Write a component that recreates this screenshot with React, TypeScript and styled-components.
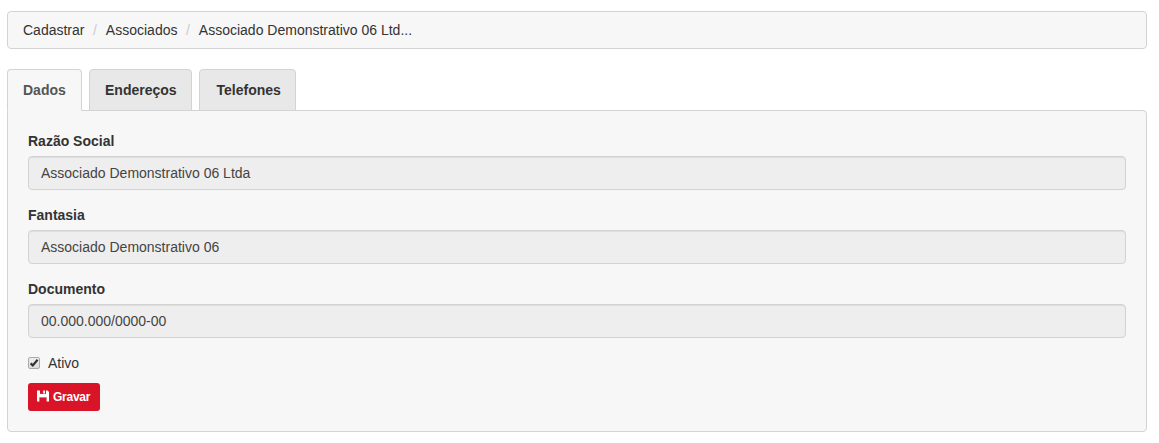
import React, { useState } from "react";
import styled, { createGlobalStyle } from "styled-components";

const GlobalStyle = createGlobalStyle`
  *, *::before, *::after { box-sizing: border-box; }
  body {
    margin: 0;
    background: #fff;
    color: #333;
    font: 14px/20px "Liberation Sans", Arial, sans-serif;
  }
`;

const Page = styled.main`
  padding: 11px 12px 11px 7px;
`;

const Breadcrumb = styled.ol`
  display: flex;
  list-style: none;
  height: 38px;
  margin: 0 0 20px;
  padding: 8px 15px;
  border: 1px solid #d3d3d3;
  border-radius: 4px;
  background: #f7f7f7;
`;

const Crumb = styled.li`
  & + &::before {
    content: "/";
    padding: 0 9px 0 8.5px;
    color: #ccc;
  }
`;

const Tabs = styled.nav`
  display: flex;
  gap: 7px;
  margin-bottom: -1px;
`;

const Tab = styled.button<{ $active: boolean; $width: number; $inset: number }>`
  position: relative;
  width: ${(p) => p.$width}px;
  height: 42px;
  padding: 0 0 0 ${(p) => p.$inset}px;
  border: 1px solid #d3d3d3;
  border-bottom-color: ${(p) => (p.$active ? "#f7f7f7" : "#d3d3d3")};
  border-radius: 4px 4px 0 0;
  background: ${(p) => (p.$active ? "#f7f7f7" : "#e8e8e8")};
  color: ${(p) => (p.$active ? "#555" : "#333")};
  font: bold 14px/20px "Liberation Sans", Arial, sans-serif;
  text-align: left;
  z-index: ${(p) => (p.$active ? 1 : 0)};
`;

const Panel = styled.section`
  height: 322px;
  padding: 20px;
  border: 1px solid #d3d3d3;
  border-radius: 0 4px 4px 4px;
  background: #f7f7f7;
`;

const Field = styled.div`
  margin-bottom: 15px;
`;

const Label = styled.label`
  display: block;
  margin-bottom: 5px;
  font-weight: bold;
`;

const Input = styled.input`
  display: block;
  width: 100%;
  height: 34px;
  padding: 6px 12px;
  border: 1px solid #d3d3d3;
  border-radius: 4px;
  background: #eee;
  box-shadow: inset 0 1px 1px rgba(0, 0, 0, 0.075);
  color: #444;
  font: 14px/20px "Liberation Sans", Arial, sans-serif;
  outline: none;
`;

const CheckRow = styled.label`
  display: flex;
  align-items: center;
  gap: 8px;
  height: 20px;
  margin-bottom: 10px;
`;

const Checkbox = styled.span`
  display: flex;
  width: 12px;
  height: 12px;
  border: 1px solid #aaa;
  border-radius: 2px;
  background: linear-gradient(#eee, #dcdcdc);
`;

const SaveButton = styled.button`
  display: flex;
  align-items: center;
  gap: 4px;
  width: 72px;
  height: 28px;
  padding: 0 9px;
  border: 0;
  border-radius: 3px;
  background: #da1428;
  color: #fff;
  font: bold 12px/18px "Liberation Sans", Arial, sans-serif;
  letter-spacing: -0.25px;
`;

const SaveIcon = styled.svg`
  flex: none;
  margin-top: -2px;
`;

const tabs = [
  { name: "Dados", width: 75, inset: 15 },
  { name: "Endereços", width: 103, inset: 15 },
  { name: "Telefones", width: 97, inset: 16.5 },
];

const fields = [
  { label: "Razão Social", value: "Associado Demonstrativo 06 Ltda" },
  { label: "Fantasia", value: "Associado Demonstrativo 06" },
  { label: "Documento", value: "00.000.000/0000-00" },
];

export default function App() {
  const [active, setActive] = useState("Dados");
  return (
    <Page>
      <GlobalStyle />
      <Breadcrumb>
        <Crumb>Cadastrar</Crumb>
        <Crumb>Associados</Crumb>
        <Crumb>Associado Demonstrativo 06 Ltd...</Crumb>
      </Breadcrumb>
      <Tabs>
        {tabs.map((t) => (
          <Tab
            key={t.name}
            $active={t.name === active}
            $width={t.width}
            $inset={t.inset}
            onClick={() => setActive(t.name)}
          >
            {t.name}
          </Tab>
        ))}
      </Tabs>
      <Panel>
        {fields.map((f) => (
          <Field key={f.label}>
            <Label>{f.label}</Label>
            <Input readOnly value={f.value} />
          </Field>
        ))}
        <CheckRow>
          <Checkbox>
            <svg width="10" height="10" viewBox="0 0 10 10">
              <path d="M1.6 5.4 3.8 7.4 8.6 1.8" fill="none" stroke="#333" strokeWidth="2.2" />
            </svg>
          </Checkbox>
          Ativo
        </CheckRow>
        <SaveButton>
          <SaveIcon width="12" height="12" viewBox="0 0 12 12" fill="#fff">
            <path d="M0 0.5H3V4.5H9V0.5H10.6L12 2V11.5H9.6V7.2H2.4V11.5H0Z" />
            <path d="M6.2 0.5H8V3.6H6.2Z" />
            <path d="M3 3.9H9V7.2H3Z" />
          </SaveIcon>
          Gravar
        </SaveButton>
      </Panel>
    </Page>
  );
}
